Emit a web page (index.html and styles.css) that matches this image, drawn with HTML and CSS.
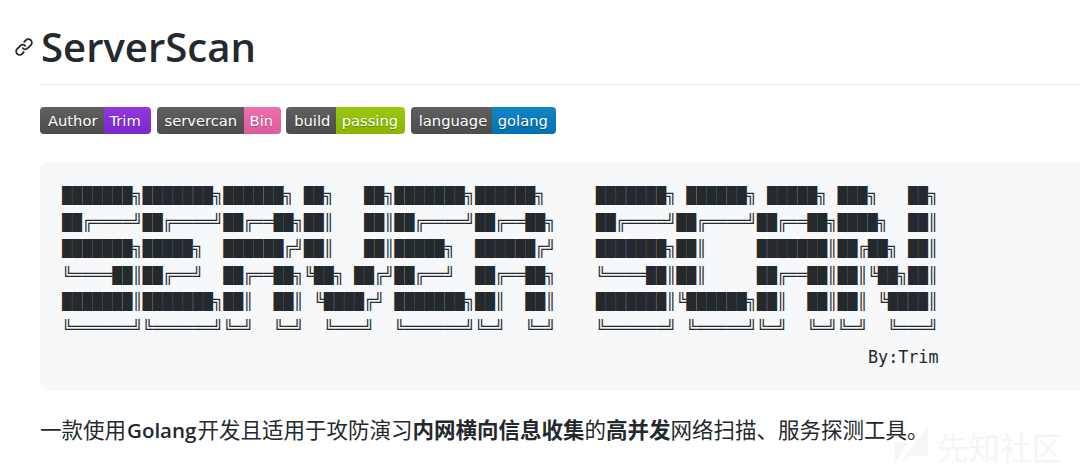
FILE: index.html
```html
<!DOCTYPE html>
<html lang="zh-CN">
<head>
<meta charset="utf-8">
<title>ServerScan</title>
<link rel="stylesheet" href="styles.css">
</head>
<body>
<main class="readme">
  <h1 class="title">
    <a class="anchor" href="#" aria-label="link">
      <svg class="link-icon" viewBox="0 0 16 16" width="20" height="20"><path fill-rule="evenodd" d="M7.775 3.275a.75.75 0 001.06 1.06l1.25-1.25a2 2 0 112.83 2.83l-2.5 2.5a2 2 0 01-2.83 0 .75.75 0 00-1.06 1.06 3.5 3.5 0 004.95 0l2.5-2.5a3.5 3.5 0 00-4.95-4.95l-1.25 1.25zm-4.69 9.64a2 2 0 010-2.83l2.5-2.5a2 2 0 012.83 0 .75.75 0 001.06-1.06 3.5 3.5 0 00-4.95 0l-2.5 2.5a3.5 3.5 0 004.95 4.95l1.25-1.25a.75.75 0 00-1.06-1.06l-1.25 1.25a2 2 0 01-2.83 0z"/></svg>
    </a>
    <span class="title-text">ServerScan</span>
  </h1>
  <div class="badges">
    <span class="badge"><span class="key k-author">Author</span><span class="val v-trim">Trim</span></span>
    <span class="badge"><span class="key k-servercan">servercan</span><span class="val v-bin">Bin</span></span>
    <span class="badge"><span class="key k-build">build</span><span class="val v-passing">passing</span></span>
    <span class="badge"><span class="key k-language">language</span><span class="val v-golang">golang</span></span>
  </div>
  <pre class="art"><code class="banner">███████╗███████╗██████╗ ██╗   ██╗███████╗██████╗     ███████╗ ██████╗ █████╗ ███╗   ██╗
██╔════╝██╔════╝██╔══██╗██║   ██║██╔════╝██╔══██╗    ██╔════╝██╔════╝██╔══██╗████╗  ██║
███████╗█████╗  ██████╔╝██║   ██║█████╗  ██████╔╝    ███████╗██║     ███████║██╔██╗ ██║
╚════██║██╔══╝  ██╔══██╗╚██╗ ██╔╝██╔══╝  ██╔══██╗    ╚════██║██║     ██╔══██║██║╚██╗██║
███████║███████╗██║  ██║ ╚████╔╝ ███████╗██║  ██║    ███████║╚██████╗██║  ██║██║ ╚████║
╚══════╝╚══════╝╚═╝  ╚═╝  ╚═══╝  ╚══════╝╚═╝  ╚═╝    ╚══════╝ ╚═════╝╚═╝  ╚═╝╚═╝  ╚═══╝</code><code class="byline">By:Trim</code></pre>
  <p class="intro">一款使用<strong class="latin">Golang</strong>开发且适用于攻防演习<strong>内网横向信息收集</strong>的<strong>高并发</strong>网络扫描、服务探测工具。</p>
</main>
<div class="watermark" aria-hidden="true">
  <svg class="wm-logo" viewBox="0 0 34 40" width="34" height="40"><polygon points="0,16 0,37 13,16"/><polygon points="5,37 33,0 33,30 15,30"/></svg>
  <span class="wm-text">先知社区</span>
</div>
</body>
</html>
```
FILE: styles.css
```css
html, body {
  margin: 0;
  height: 470px;
  overflow: hidden;
  background: #fff;
}
body {
  position: relative;
  color: #24292e;
  font-family: "Open Sans", "Noto Sans CJK SC", sans-serif;
}
.readme {
  padding: 17px 0 0 40px;
}
.title {
  position: relative;
  margin: 0 0 22px;
  height: 67px;
  border-bottom: 1px solid #eaecef;
  font-size: 40.1px;
  font-weight: 600;
  line-height: 60px;
}
.title-text {
  margin-left: 1px;
}
.anchor {
  position: absolute;
  left: -26px;
  top: 20px;
  line-height: 0;
}
.link-icon {
  fill: #24292e;
}
.badges {
  display: flex;
  gap: 5.6px;
  height: 27px;
}
.badge {
  display: flex;
  height: 27px;
  border-radius: 4px;
  overflow: hidden;
  color: #fff;
  font-family: "DejaVu Sans", sans-serif;
  font-size: 14.7px;
  line-height: 27px;
  text-shadow: 0 1px 1px rgba(0, 0, 0, .3);
}
.key,
.val {
  display: block;
  box-sizing: border-box;
  background-image: linear-gradient(rgba(187, 187, 187, .1), rgba(0, 0, 0, .1));
}
.key {
  padding-left: 8px;
  background-color: #555;
}
.val {
  padding-left: 6px;
}
.k-author { width: 63.5px; }
.k-servercan { width: 87px; }
.k-build { width: 49.5px; }
.k-language { width: 81px; }
.v-trim { width: 47.5px; background-color: #8a2be2; }
.v-bin { width: 37px; background-color: #f566ad; }
.v-passing { width: 69.5px; background-color: #97ca00; }
.v-golang { width: 64px; background-color: #007ec6; }
.art {
  margin: 28px -10px 0 0;
  height: 229px;
  box-sizing: border-box;
  padding: 21px 0 0 22px;
  border-radius: 8px;
  background: #f6f8fa;
  overflow: hidden;
  font-family: "Liberation Mono", "DejaVu Sans Mono", monospace;
  font-size: 16.8px;
  line-height: 26.6px;
}
.banner {
  display: block;
  font: inherit;
}
.byline {
  display: block;
  margin: 1px 0 0 806px;
  font-family: "DejaVu Sans Mono", monospace;
  font-size: 16.74px;
  line-height: 26px;
}
.intro {
  margin: 23px 0 0;
  font-size: 21.5px;
  line-height: 32px;
  white-space: nowrap;
}
.intro strong {
  font-weight: 700;
}
.intro .latin {
  margin: 0 1px;
  font-size: 20.5px;
  font-weight: 600;
}
.watermark {
  position: absolute;
  left: 895px;
  top: 426px;
  display: flex;
  align-items: center;
  gap: 8px;
}
.wm-logo {
  fill: #f6f6f6;
}
.wm-text {
  color: #f5f5f5;
  font-family: "Noto Sans CJK SC", sans-serif;
  font-size: 31.5px;
  line-height: 40px;
  white-space: nowrap;
}
```
